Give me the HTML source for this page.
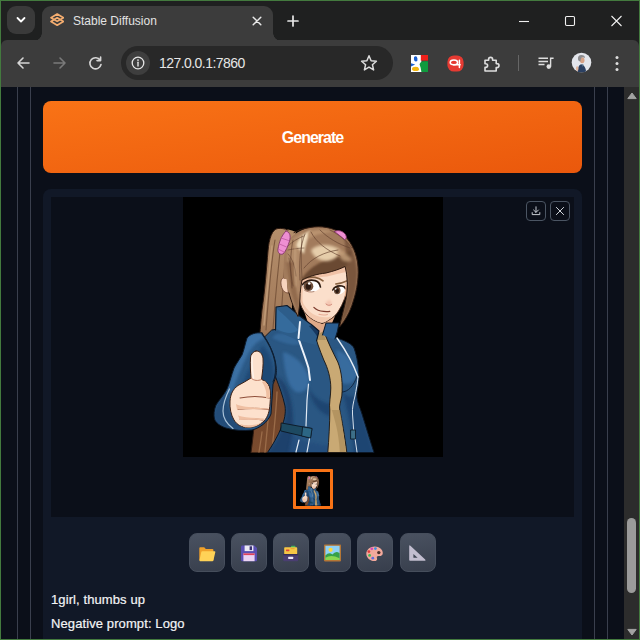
<!DOCTYPE html>
<html lang="en">
<head>
<meta charset="utf-8">
<title>Stable Diffusion</title>
<style>
*{box-sizing:border-box;margin:0;padding:0}
html,body{width:640px;height:640px;overflow:hidden;background:#437a3e}
body{position:relative;font-family:"Liberation Sans",sans-serif}
.abs{position:absolute}
#win{left:1px;top:1px;width:638px;height:638px;background:#1f2020;overflow:hidden}
/* coordinates inside #win are page coords minus 1 */
#tabdd{left:6px;top:5px;width:28px;height:28px;border-radius:9px;background:#3a3a3a}
#tab{left:41px;top:5px;width:231px;height:35px;background:#3c3c3c;border-radius:9px 9px 0 0}
#tab:before,#tab:after{content:"";position:absolute;bottom:0;width:8px;height:8px;background:radial-gradient(circle at 0 0,rgba(0,0,0,0) 7.5px,#3c3c3c 8px)}
#tab:before{left:-8px}
#tab:after{right:-8px;background:radial-gradient(circle at 100% 0,rgba(0,0,0,0) 7.5px,#3c3c3c 8px)}
#tabtitle{left:72px;top:12px;font-size:12px;line-height:16px;color:#e3e3e3;white-space:nowrap;transform-origin:0 50%}
#toolbar{left:0;top:39px;width:638px;height:47px;background:#3c3c3c;border-radius:6px 6px 0 0}
#pill{left:120px;top:45px;width:272px;height:34px;border-radius:17px;background:#282828}
#info{left:125px;top:50px;width:24px;height:24px;border-radius:12px;background:#3e3e3e}
#url{left:158px;top:53px;font-size:14px;letter-spacing:-0.55px;line-height:18px;color:#e6e6e6;white-space:nowrap;transform-origin:0 50%}
#page{left:0;top:86px;width:623px;height:552px;background:#0b0f19;overflow:hidden}
.vl{top:0;width:1px;height:552px;background:#3a3f4d}
#sb{left:623px;top:86px;width:15px;height:552px;background:#2c2c2c}
#thumbbar{left:3px;top:431px;width:9px;height:75px;border-radius:5px;background:#9b9b9b}
#gen{left:42px;top:14px;width:539px;height:72px;border-radius:8px;background:linear-gradient(to bottom right,#f97316,#ea580c);color:#fff;font-weight:bold;font-size:16px;letter-spacing:-1px;text-align:center}
#gentxt{left:0;top:27px;width:539px;line-height:20px;white-space:nowrap}
#panel{left:42px;top:102px;width:539px;height:470px;border-radius:8px;background:#111827}
#gal{left:8px;top:8px;width:523px;height:320px;background:#0b0f19}
#img{left:132px;top:0;width:260px;height:260px;background:#000}
.ib{top:4px;width:20px;height:20px;border:1px solid #4b5563;border-radius:4px;background:#0b0f19}
#th{left:242px;top:272px;width:40px;height:40px;border:3px solid #f97316;background:#000;border-radius:1px}
.tb{top:344px;width:36px;height:39px;border-radius:8px;border:1px solid #464e5c;background:linear-gradient(170deg,#4a5261,#373e4c)}
.tb svg{position:absolute;left:9px;top:11px;width:16px;height:16px}
.info{left:8px;font-size:13px;letter-spacing:0.1px;-webkit-text-stroke:0.2px #f3f4f6;line-height:20px;color:#f3f4f6;white-space:nowrap;transform-origin:0 50%}
</style>
</head>
<body>
<div id="win" class="abs">
  <!-- tab strip -->
  <div id="tabdd" class="abs"><svg class="abs" style="left:9px;top:10px" width="10" height="8" viewBox="0 0 10 8"><path d="M1.5 2 L5 5.5 L8.5 2" fill="none" stroke="#fff" stroke-width="1.8" stroke-linecap="round" stroke-linejoin="round"/></svg></div>
  <div id="tab" class="abs"></div>
  <svg class="abs" style="left:48.8px;top:12.4px" width="14.4" height="13.2" viewBox="0 0 14.4 13.2"><g fill="none" stroke="#f4ad70" stroke-width="1.7" stroke-linejoin="round"><path d="M7.2 1 L13.4 4.7 L7.2 8.4 L1 4.7 Z"/><path d="M7.2 4.8 L13.4 8.5 L7.2 12.2 L1 8.5 Z"/></g></svg>
  <div id="tabtitle" class="abs">Stable Diffusion</div>
  <svg class="abs" style="left:251px;top:15px" width="10" height="10" viewBox="0 0 10 10"><path d="M1.2 1.2 L8.8 8.8 M8.8 1.2 L1.2 8.8" stroke="#e8e8e8" stroke-width="1.5" stroke-linecap="round"/></svg>
  <svg class="abs" style="left:286px;top:14px" width="12" height="12" viewBox="0 0 12 12"><path d="M6 1 V11 M1 6 H11" stroke="#e8e8e8" stroke-width="1.7" stroke-linecap="round"/></svg>
  <!-- window controls -->
  <svg class="abs" style="left:517px;top:13px" width="106" height="14" viewBox="0 0 106 14"><g fill="none" stroke="#f0f0f0" stroke-width="1.1"><path d="M1 7.5 H11"/><rect x="47.5" y="2.5" width="9" height="9" rx="1.2"/><path d="M93.5 2 L103.5 12 M103.5 2 L93.5 12"/></g></svg>
  <!-- toolbar -->
  <div id="toolbar" class="abs"></div>
  <svg class="abs" style="left:14px;top:54px" width="90" height="16" viewBox="0 0 90 16"><g fill="none" stroke-width="1.6" stroke-linecap="round" stroke-linejoin="round"><path d="M14 8 H3 M8 3 L3 8 L8 13" stroke="#d6d6d6"/><path d="M39 8 H50 M45 3 L50 8 L45 13" stroke="#7a7a7a"/><path d="M85.2 5.2 A5.6 5.6 0 1 0 86 9.5 M85.6 2 V5.6 H82" stroke="#d6d6d6"/></g></svg>
  <div id="pill" class="abs"></div>
  <div id="info" class="abs"><svg class="abs" style="left:5px;top:5px" width="14" height="14" viewBox="0 0 14 14"><circle cx="7" cy="7" r="5.8" fill="none" stroke="#e6e6e6" stroke-width="1.3"/><path d="M7 6.3 V10" stroke="#e6e6e6" stroke-width="1.4" stroke-linecap="round"/><circle cx="7" cy="4.1" r=".9" fill="#e6e6e6"/></svg></div>
  <div id="url" class="abs">127.0.0.1:7860</div>
  <svg class="abs" style="left:359px;top:53px" width="18" height="18" viewBox="0 0 18 18"><path d="M9 1.8 L11.1 6.7 L16.4 7.2 L12.4 10.7 L13.6 15.9 L9 13.1 L4.4 15.9 L5.6 10.7 L1.6 7.2 L6.9 6.7 Z" fill="none" stroke="#dcdcdc" stroke-width="1.5" stroke-linejoin="round"/></svg>
  <!-- extension icons -->
  <svg class="abs" style="left:410px;top:53.5px" width="17" height="17" viewBox="0 0 17 17"><rect x="0" y="0" width="10.4" height="17" fill="#fff"/><rect x="9.8" y="0" width="7.2" height="5.6" fill="#f0201a"/><path d="M8.4 17 V10 Q9 6.2 12.6 6.2 H17 V17 Z" fill="#109a3e"/><ellipse cx="4.7" cy="3.9" rx="1.8" ry="2.7" fill="#1a5fd0" transform="rotate(-8 4.7 3.9)"/><path d="M0 8.2 L4.2 9.6 L0 11.6 Z" fill="#1a5fd0"/><ellipse cx="4.6" cy="13.9" rx="3.6" ry="2.1" fill="#f4b70e"/><path d="M6.2 7.6 Q9 9.6 9.6 12.6 L10.4 17 H8 Q8.8 12 4.8 10 Z" fill="#fff"/></svg>
  <svg class="abs" style="left:446px;top:54px" width="17" height="17" viewBox="0 0 17 17"><rect x="0.4" y="0.4" width="16.2" height="16.2" rx="6.5" fill="#e63a32"/><ellipse cx="6.9" cy="7.4" rx="3.7" ry="2.3" fill="none" stroke="#fff" stroke-width="1.5"/><path d="M6.5 9.7 H13.2 M12.4 5.2 V12.4" fill="none" stroke="#fff" stroke-width="1.5" stroke-linecap="round"/></svg>
  <svg class="abs" style="left:482px;top:54px" width="18" height="18" viewBox="0 0 18 18"><path d="M2 5.2 H5.6 V4.4 A2 2 0 0 1 9.6 4.4 V5.2 H13.2 V8.6 H14 A2 2 0 0 1 14 12.6 H13.2 V16 H2 V12.4 H2.8 A1.8 1.8 0 0 0 2.8 8.8 H2 Z" fill="none" stroke="#dedede" stroke-width="1.6" stroke-linejoin="round"/></svg>
  <div class="abs" style="left:517px;top:54px;width:1px;height:16px;background:#666"></div>
  <svg class="abs" style="left:537px;top:55px" width="16" height="14" viewBox="0 0 16 14"><g fill="none" stroke="#dedede" stroke-width="1.5"><path d="M0.5 2.2 H10 M0.5 5.4 H10 M0.5 8.6 H6.5"/><path d="M12.6 10.4 V2.2 H15.6" stroke-width="1.4"/></g><circle cx="10.8" cy="10.6" r="2.3" fill="#dedede"/></svg>
  <svg class="abs" style="left:569.5px;top:51px" width="21" height="21" viewBox="0 0 21 21"><defs><clipPath id="avc"><circle cx="10.5" cy="10.5" r="9.8"/></clipPath></defs><circle cx="10.5" cy="10.5" r="9.8" fill="#e3e5eb"/><g clip-path="url(#avc)"><path d="M6.6 21 Q6.4 13.6 10 12.2 Q14.6 12.6 15.4 21 Z" fill="#2b4062"/><path d="M10.4 12.2 L11.6 15 L12.6 12.4 Z" fill="#4e6f8c"/><ellipse cx="11.2" cy="8.2" rx="2.3" ry="3" fill="#d6a286"/><path d="M7 7.6 Q6.4 3.2 10.4 3 Q14 3 14 6 Q12 4.8 10.6 5.6 Q9.6 7 9.4 9.6 Q7.4 9.6 7 7.6 Z" fill="#8b8b8e"/><ellipse cx="6.2" cy="16.6" rx="1.3" ry="2.3" fill="#e0b59c"/></g></svg>
  <svg class="abs" style="left:614px;top:54px" width="4" height="17" viewBox="0 0 4 17"><g fill="#dedede"><circle cx="2" cy="2.5" r="1.5"/><circle cx="2" cy="8.5" r="1.5"/><circle cx="2" cy="14.5" r="1.5"/></g></svg>

  <!-- web page -->
  <div id="page" class="abs">
    <div class="abs vl" style="left:16px"></div>
    <div class="abs vl" style="left:29px"></div>
    <div class="abs vl" style="left:593px"></div>
    <div class="abs vl" style="left:606px"></div>
    <div id="gen" class="abs"><div id="gentxt" class="abs">Generate</div></div>
    <div id="panel" class="abs">
      <div id="gal" class="abs">
        <div id="img" class="abs"><!--GIRL--><svg class="abs" style="left:0;top:0" width="260" height="260" viewBox="183 197 260 260">
<defs>
<linearGradient id="pg" x1="0" y1="230" x2="0" y2="452" gradientUnits="userSpaceOnUse"><stop offset="0" stop-color="#b48e6b"/><stop offset=".45" stop-color="#a07858"/><stop offset=".68" stop-color="#6f4329"/><stop offset="1" stop-color="#7a4b2e"/></linearGradient>
<linearGradient id="jg" x1="260" y1="330" x2="370" y2="450" gradientUnits="userSpaceOnUse"><stop offset="0" stop-color="#2e5e8b"/><stop offset=".5" stop-color="#295581"/><stop offset="1" stop-color="#26507b"/></linearGradient>
<linearGradient id="hg" x1="290" y1="228" x2="350" y2="300" gradientUnits="userSpaceOnUse"><stop offset="0" stop-color="#b08a69"/><stop offset=".5" stop-color="#a67f60"/><stop offset="1" stop-color="#8f674a"/></linearGradient>
<filter id="bl" x="-30%" y="-30%" width="160%" height="160%"><feGaussianBlur stdDeviation="1.6"/></filter><filter id="bl2" x="-30%" y="-30%" width="160%" height="160%"><feGaussianBlur stdDeviation="0.8"/></filter>
<symbol id="girl" viewBox="183 197 260 260">
<g stroke-linejoin="round" stroke-linecap="round">
<!-- ponytail -->
<path d="M278 228.5 C272 229 269 239 268 251 C266.5 268 265 290 262 310 C259.5 335 257.5 365 256.5 395 C255 420 253 438 251 452.5 L292 452.5 L292 300 L291 254 L296 232 C290 229.5 284 228 278 228.5 Z" fill="url(#pg)"/><path d="M288 230 C284.5 228.6 281 228.2 278 228.5 C272 229 269 239 268 251 C266.5 268 265 290 262 310 C259.5 335 257.5 365 256.5 395 C255 420 253 438 251 452.5" fill="none" stroke="#2e1a10" stroke-width="1"/>
<path d="M275 240 C271 262 269 290 266 330 M280 252 C277 280 274 310 272 345 M285 262 C283 290 281 315 280 335" fill="none" stroke="#7b573d" stroke-width="1.1"/>
<path d="M272 246 C269 270 267 295 264 325" fill="none" stroke="#c6a07c" stroke-width="1.6" opacity=".8"/>
<path d="M262 432 C261 440 260 446 259 452 M270 400 C268 420 266 440 265 452 M277 392 C276 415 273 438 272 452" fill="none" stroke="#9b6c49" stroke-width="1.3"/>
<!-- torso -->
<clipPath id="tc"><path d="M272 330 C290 326 320 328 337 338 C346 341 352 344 354 348 C357 356 359 368 359 378 C359 386 356 392 357 398 C358 404 360 408 361 411 C364 420 368 434 374 452.5 L267.5 452.5 C272 446 278 436 281.5 427 C284.5 420 286 413 285 406 C283 396 279 386 276 378 L262 340 Z"/></clipPath>
<path d="M272 330 C290 326 320 328 337 338 C346 341 352 344 354 348 C357 356 359 368 359 378 C359 386 356 392 357 398 C358 404 360 408 361 411 C364 420 368 434 374 452.5 L267.5 452.5 C272 446 278 436 281.5 427 C284.5 420 286 413 285 406 C283 396 279 386 276 378 L262 340 Z" fill="#2a5783"/>
<g clip-path="url(#tc)">
<path d="M283 352 C292 354 304 362 309 378 C310 388 304 394 296 392 C288 388 284 370 283 352 Z" fill="#3a70a4" filter="url(#bl)" opacity=".9"/>
<path d="M336 350 C346 352 354 362 357 376 C354 384 346 386 340 382 C338 372 338 360 336 350 Z" fill="#3a70a4" filter="url(#bl)" opacity=".85"/>
<path d="M276 376 C282 388 287 402 286 414 C284 430 274 444 266 454 L290 454 C294 436 294 414 291 400 C288 388 284 380 276 376 Z" fill="#1b406b" filter="url(#bl)" opacity=".9"/>
<path d="M308 388 C314 398 324 404 332 404 L331 416 C320 414 312 404 308 388 Z" fill="#1c426e" filter="url(#bl)" opacity=".85"/>
<path d="M342 392 C348 398 354 398 358 394 C360 406 366 424 374 454 L354 454 C352 430 348 410 342 392 Z" fill="#1d436f" filter="url(#bl)" opacity=".85"/>
<path d="M292 436 C300 440 314 444 330 446 L330 454 L288 454 Z" fill="#21497a" filter="url(#bl)" opacity=".6"/>
<path d="M276 334 C286 332 296 336 300 344 C294 346 284 344 272 338 Z" fill="#3a70a4" filter="url(#bl2)" opacity=".6"/>
</g>
<path d="M272 330 C290 326 320 328 337 338 C346 341 352 344 354 348 C357 356 359 368 359 378 C359 386 356 392 357 398 C358 404 360 408 361 411 C364 420 368 434 374 452.5 L267.5 452.5 C272 446 278 436 281.5 427 C284.5 420 286 413 285 406 C283 396 279 386 276 378 L262 340 Z" fill="none" stroke="#0c1828" stroke-width="1"/>
<path d="M357 376 C354 386 348 392 342 392" fill="none" stroke="#10233c" stroke-width=".9"/>
<!-- tan strip -->
<g transform="translate(-1.2 0)"><path d="M315 330 L325 331 C328 340 334 352 339 362 C343 372 344 384 343 396 C342 402 340 406 341 410 C343 420 346 436 348 452.5 L329 452.5 C330 440 331 424 331 410 C330 404 332 396 332 388 C332 378 329 368 325 360 C321 350 317 340 315 330 Z" fill="#c9a974" stroke="#1a1410" stroke-width=".9"/>
<path d="M333 410 C336 420 340 432 341 452 L347 452 C345 436 343 420 341 410 Z" fill="#a98b5a" opacity=".7"/>
<path d="M316 331 L324 332 L327 340 L319 340 Z" fill="#a98b5a" opacity=".8"/>
</g>
<!-- white stripes -->
<path d="M300 322 L298.5 338 C300 344 305 356 308.5 368 L310 380" fill="none" stroke="#eef3fa" stroke-width="2"/>
<path d="M308.5 384 L307 400 L306 426 M310 436 L307 452 M299 440 L296 452" fill="none" stroke="#e1eaf4" stroke-width="1.2"/>
<path d="M337 338 C344 348 352 360 358 377" fill="none" stroke="#e6eef6" stroke-width="1.4"/><path d="M358 377 C357.5 384 356 390 355 396 C353.5 402 352 408 352.5 414 L353.5 428 L357 452" fill="none" stroke="#d5e0ec" stroke-width="1"/>
<!-- pocket straps -->
<path d="M281.5 423 L312 428.5 L310.5 438 L281 431 Z" fill="#1d4961" stroke="#0b1622" stroke-width=".9"/>
<path d="M303 427 L312 428.5 L310.5 438 L302 436 Z" fill="#2c6684" stroke="#0b1622" stroke-width=".7"/>
<path d="M351 430 L355.5 430 L355.5 439 L351 439 Z" fill="#3d6f88" stroke="#0b1622" stroke-width=".8"/>
<!-- neck -->
<path d="M303 308 L322 324 L335 316 L330 328 L320 333 L309 326 Z" fill="#dfa988"/>
<!-- collar -->
<path d="M276 307 L287 305.5 C292 309 296 313 299 315.5 C304 319 309 323 312 325 L319 331 L316 345 C304 342 290 338 275.5 330 Z" fill="#2d5d8a"/>
<path d="M277 309 C283 314 292 322 298 330 C294 334 286 334 276.5 329 Z" fill="#3b74a9" opacity=".6"/>
<path d="M312 325 L319 331 L317.5 337 C315 333 312 329 309 326 Z" fill="#17385f"/>
<path d="M275.5 330 L276 307 L287 305.5 C292 309 296 313 299 315.5 C304 319 309 323 312 325 L319 331 L316.5 341" fill="none" stroke="#0c1828" stroke-width="1.1"/>
<path d="M326 323 L339 323 L337.5 331 L335 340 L322.5 335 Z" fill="#2a5d90"/>
<path d="M322.5 335 L326 323 L339 323 L337.5 331 L335 339" fill="none" stroke="#0c1828" stroke-width="1"/>
<path d="M300 322 L298.5 338" fill="none" stroke="#eef3fa" stroke-width="2"/>
<!-- ear -->
<path d="M287 279 C283 276 280.5 279 281 284 C281.5 289 284 293 288 293 Z" fill="#f6d3bd" stroke="#6a3f2c" stroke-width=".8"/>
<!-- face -->
<path d="M301 279 C306 275 316 272 326 272 C334 270 340 268 345 266 C347 272 348 280 347 288 C346 296 343 304 338.5 311 C336 315 333 318 329 320 C326 322 324 323.5 321 323 C316 322 311 319 307 315 C303 311 300 305 299 298 C299 291 300 285 301 279 Z" fill="#fbdfcb" stroke="#4a2a1c" stroke-width=".9"/>
<path d="M300 297 C301 305 305 312 310 317 C314 320 318 322.5 322 323 C326 322 330 319 333 316 C327 318 320 318 313 314 C307 310 303 304 300 297 Z" fill="#f1c5aa" opacity=".85"/>
<path d="M301 280 C306 276 316 273 326 273 C334 271 340 269 345 267 L346 272 C340 273 334 275 327 276.5 C318 277 308 279.5 302 284 Z" fill="#eebfa3" opacity=".9"/>
<path d="M301 282 L304 282 C302.5 290 302 298 303 306 L300 300 Z" fill="#eebfa3" opacity=".8"/>
<!-- left eye -->
<path d="M302.6 285.6 C304.6 281.6 310 279.8 315 281.2 C318 282.2 319.6 284.6 320 287.6 C318.6 290.6 315 292 311 291.6 C306.6 291.4 303.6 289 302.6 285.6 Z" fill="#fff"/>
<circle cx="308.4" cy="286.2" r="4.9" fill="#6f4f3b"/>
<ellipse cx="308.3" cy="286.6" rx="2.7" ry="3.1" fill="#2c1a12"/>
<circle cx="309.2" cy="283.5" r="1.25" fill="#fff"/>
<path d="M302.4 284.6 C304.6 281 310 279.2 315.2 280.6 C318.4 281.6 320 284 320.4 287" fill="none" stroke="#2c1a10" stroke-width="1.7"/>
<path d="M304.6 290.4 C307 292 311 292.4 314 291.6" fill="none" stroke="#8c5a46" stroke-width=".7"/>
<!-- right eye -->
<path d="M333 290.4 C334.4 287.2 338 285.8 341.6 286.4 C343.6 286.9 344.6 288 344.6 290.4 C343.2 293.2 340.4 294.6 337.4 294.4 C335 294 333.4 292.6 333 290.4 Z" fill="#fff"/>
<ellipse cx="337.2" cy="290.5" rx="3.3" ry="3.8" fill="#6f4f3b"/>
<ellipse cx="337.1" cy="290.8" rx="1.9" ry="2.4" fill="#2c1a12"/>
<circle cx="335.6" cy="288.7" r=".95" fill="#fff"/>
<path d="M332.8 290 C334.4 286.8 338 285.4 342 286 C344 286.4 345 287.2 345.4 288.6" fill="none" stroke="#2c1a10" stroke-width="1.6"/>
<!-- brows -->
<path d="M302 279.7 C306 277.5 311 276.8 315 277.3 C318 277.9 321 279.1 323 280.8" fill="none" stroke="#87603f" stroke-width="1.7"/>
<path d="M335.8 284 C340 283.5 344 282.4 347.4 280.8" fill="none" stroke="#87603f" stroke-width="1.6"/>
<!-- nose & mouth -->
<path d="M325.4 302.4 C326.6 305.4 329.6 306.4 331.8 304.2 C331.4 302.6 330.6 301 330 299.6" fill="#eeb09c" opacity=".55" filter="url(#bl2)"/>
<path d="M326 304 C327.6 305.6 330 305.8 331.6 304.4" fill="none" stroke="#c97c6c" stroke-width=".9"/>
<path d="M313.9 307.4 C316.4 310 320 311.2 323.6 311.4 C326 311.6 328 311.6 329.8 311.3" fill="none" stroke="#7d3b2e" stroke-width="1.3"/>
<path d="M319 314.2 C322 315.2 325 315.2 327.4 314.4" fill="none" stroke="#e8ab95" stroke-width="1.1"/>
<path d="M345 281 C346.6 285 347.2 289 346.6 294 L344 300 C345.4 294 345.6 287 345 281 Z" fill="#efb38f" opacity=".8"/>
<!-- hair front -->
<clipPath id="hc"><path d="M284 279 C283 266 284 254 286 245 C290 236 299 230 310 227.5 C321 225.5 333 227.5 342 233.5 C350 240 355.5 250 357.5 262 C359.5 276 357 290 353 302 C350 312 345 321 339.5 327 C341 320 343 312 345 304 C347 296 348 286 347 278 C346.5 273 346 270 345 266.5 C340 269 334 271 326 273 C317 274 308 276.5 302 280 C301 286 300 292 300 298 L299.5 306 L298 316.5 C295 311 291 301 289 293 C287.5 288 286.5 283 287 279 Z"/></clipPath>
<path d="M284 279 C283 266 284 254 286 245 C290 236 299 230 310 227.5 C321 225.5 333 227.5 342 233.5 C350 240 355.5 250 357.5 262 C359.5 276 357 290 353 302 C350 312 345 321 339.5 327 C341 320 343 312 345 304 C347 296 348 286 347 278 C346.5 273 346 270 345 266.5 C340 269 334 271 326 273 C317 274 308 276.5 302 280 C301 286 300 292 300 298 L299.5 306 L298 316.5 C295 311 291 301 289 293 C287.5 288 286.5 283 287 279 Z" fill="#a27b5c"/>
<g clip-path="url(#hc)">
<!-- right shadow side -->
<path d="M344 238 C352 246 356 258 357 270 C358 290 352 310 339 328 L346 300 C349 286 348 274 345 266 C346 256 346 246 344 238 Z" fill="#7a563d" filter="url(#bl2)"/>
<!-- under-bang shadow -->
<path d="M300 282 C306 270 318 262 332 258 C340 256 346 254 352 250 L346 268 C338 271 332 273 326 274 C316 275 308 278 300 282 Z" fill="#6b4932" filter="url(#bl2)"/>
<!-- left pulled-back zone lighter -->
<path d="M287 244 C292 238 298 234 304 232 C300 244 299 258 300 272 L299 300 L297 316 C292 304 288 290 287 278 Z" fill="#b28c6b" filter="url(#bl2)"/>
<path d="M286 262 C287 272 288 282 291 294 L298 316 L299 300 C296 290 294 276 294 262 Z" fill="#8a6447" filter="url(#bl2)" opacity=".8"/>
<!-- bang highlight band -->
<path d="M311 250 C317 244 329 243 339 249 C340 255 335 260 327 261 C319 261 313 257 311 250 Z" fill="#e6cdaa" filter="url(#bl)"/>
<path d="M336 248 C342 250 348 254 352 260 C350 262 346 262 342 260 C339 256 337 252 336 248 Z" fill="#c7a37e" filter="url(#bl)" opacity=".8"/>
<!-- part highlight -->
<path d="M296 246 C298 238 304 232.5 311 230.5 C308 237 305 245 304 254 Z" fill="#efdcbc" filter="url(#bl2)"/>
<path d="M308 232 C316 229 326 229 334 232 C326 232 316 234 309 239 Z" fill="#b9936f" filter="url(#bl2)"/>
<!-- strands -->
<path d="M305 234 C300 246 299 262 300 280 M293 240 C290 254 290 270 292 288 M311 232 C316 242 326 250 340 256 M320 230 C328 238 338 244 350 248 M304 268 C312 258 324 252 338 250 M330 230 C338 234 346 240 352 248" fill="none" stroke="#654330" stroke-width=".8" opacity=".85"/>
<path d="M288 246 C292 242 298 238 304 236 M288 250 C293 249 299 248 304 248 M288 254 C292 258 295 266 296 276 M289 258 C290 266 291 276 293 286 M302 236 C301 250 301 264 302 278" fill="none" stroke="#5f3f2c" stroke-width=".7" opacity=".8"/>
<path d="M296 242 C294 256 294 270 296 286" fill="none" stroke="#d2b08c" stroke-width="1.4" opacity=".7" filter="url(#bl2)"/>
</g>
<path d="M294 232.6 C299 229.8 304 228.4 310 227.5 C321 225.5 333 227.5 342 233.5 C350 240 355.5 250 357.5 262 C359.5 276 357 290 353 302 C350 312 345 321 339.5 327 C341 320 343 312 345 304 C347 296 348 286 347 278 C346.5 273 346 270 345 266.5 C340 269 334 271 326 273 C317 274 308 276.5 302 280 C301 286 300 292 300 298 L299.5 306 L298 316.5 C295 311 291 301 289 293" fill="none" stroke="#2e1a10" stroke-width="1"/>
<!-- pink ties -->
<path d="M286 231 C290 232 291 236 289.5 241 C288 246 286 251 283 254 C280 255 277.5 253 278 249 C279 243 281 236 286 231 Z" fill="#ee8fd2" stroke="#7a2c62" stroke-width=".8"/>
<path d="M281 238 L288.5 240.5 M279.5 244 L286.5 247 M279 249.5 L284 252" fill="none" stroke="#c55fa6" stroke-width=".9"/>
<path d="M334.5 231.5 C338 229.5 343 231 345.5 234.5 C347 237 346.5 239.5 344.5 239.5 C341 236.5 337.5 234 334.5 231.5 Z" fill="#ee8fd2" stroke="#7a2c62" stroke-width=".8"/>
<!-- sleeve -->
<clipPath id="sc"><path d="M262 333 C256 332 250 334 247 338 C245 344 244 350 242 355 C239 360 236 364 234 368 C231 376 230 382 227 389 C224 395 219 400 216 405 C214 410 213.5 415 214.5 419 C216 423 220 426 226 428 C234 430.5 244 431 252 430 C260 428 268 422 271 414 L273 384 C276 378 277 372 276 366 C275 356 270 344 262 333 Z"/></clipPath>
<path d="M262 333 C256 332 250 334 247 338 C245 344 244 350 242 355 C239 360 236 364 234 368 C231 376 230 382 227 389 C224 395 219 400 216 405 C214 410 213.5 415 214.5 419 C216 423 220 426 226 428 C234 430.5 244 431 252 430 C260 428 268 422 271 414 L273 384 C276 378 277 372 276 366 C275 356 270 344 262 333 Z" fill="#2c5a87"/>
<g clip-path="url(#sc)">
<path d="M262 333 C254 331 248 334 246 340 C243 352 238 360 234 368 C231 378 229 386 226 392 L232 392 C236 380 242 366 248 354 C252 346 258 340 266 338 Z" fill="#3d73a8" filter="url(#bl)" opacity=".9"/>
<path d="M262 345 C258 356 250 366 244 380 C240 392 238 408 242 426 L266 426 L274 384 C276 370 272 354 262 345 Z" fill="#1f4673" filter="url(#bl)" opacity=".85"/>
<path d="M226 392 C220 400 214 408 214 418 C216 426 230 432 252 430 C240 428 228 420 226 392 Z" fill="#204875" filter="url(#bl2)" opacity=".8"/>
</g>
<path d="M262 333 C256 332 250 334 247 338 C245 344 244 350 242 355 C239 360 236 364 234 368 C231 376 230 382 227 389 C224 395 219 400 216 405 C214 410 213.5 415 214.5 419 C216 423 220 426 226 428 C234 430.5 244 431 252 430 C260 428 268 422 271 414 L273 384 C276 378 277 372 276 366 C275 356 270 344 262 333 Z" fill="none" stroke="#0c1828" stroke-width="1"/>
<path d="M262 334 C268 342 273 352 275 362 C276 370 276 376 273 382" fill="none" stroke="#0f2035" stroke-width="1.1"/>
<path d="M229.5 389 C226 396 223 404 223 411 C223 418 227 424 233 428.5" fill="none" stroke="#a9c2d8" stroke-width="1.2"/>
<!-- fist -->
<path d="M256 351 C259 350.5 262 353 263 358 C263.5 365 262.5 372 261.5 379.5 C265 380.5 268 383 269.5 387 C271 392 270.5 398 270 404 C269.5 411 268 417 264 421 C260 425 254 427.5 248 427.5 C242 427.5 237 425 234 420 C231 415 229.5 408 230 401 C230.5 394 233 389 238 385.5 C242 383 247 381 251 378 C250.5 372 250 364 250.5 358 C251 354 253 351.5 256 351 Z" fill="#fde1cd" stroke="#3e2216" stroke-width="1"/>
<path d="M240 398 C250 396 260 396 269.5 398 M238 409.5 C248 408 258 408 268.5 409.5 M240 419 C248 418.5 256 418.5 263 420" fill="none" stroke="#8f4f3a" stroke-width="1.1"/>
<path d="M262 382 C266 388 267 394 266 398 L269.5 398 C270.5 392 269 385 265 381 Z" fill="#efbfa2"/>
<path d="M236 404 C240 406.5 250 407.5 268.5 408.5 L268.5 409.5 C256 409 244 409 237 409.5 Z M238 415.5 C244 417.5 254 418 264 418.5 L263 420 C254 419.5 246 419.5 240 420 Z M240 424 C246 426 256 425.5 262 422.5 C258 426 252 427.5 248 427.5 C244 427.5 242 426 240 424 Z" fill="#efbfa2"/>
<path d="M251 378 C254 381 258 381 261.5 379.5" fill="none" stroke="#b97258" stroke-width=".9"/>
<path d="M252 356 C252 364 252.5 372 253.5 378" fill="none" stroke="#fff" stroke-width="1.6" opacity=".55"/>
</g>
</symbol>
</defs>
<use href="#girl" x="183" y="197" width="260" height="260"/>
</svg><!--/GIRL--></div>
        <div class="abs ib" style="left:475px"><svg class="abs" style="left:4px;top:4px" width="10" height="10" viewBox="0 0 10 10"><path d="M5 0.8 V6.2 M2.6 4 L5 6.4 L7.4 4 M1.2 6.6 V8.6 H8.8 V6.6" fill="none" stroke="#d1d5db" stroke-width=".95" stroke-linecap="round" stroke-linejoin="round"/></svg></div>
        <div class="abs ib" style="left:499px"><svg class="abs" style="left:4px;top:4px" width="10" height="10" viewBox="0 0 10 10"><path d="M1.4 1.4 L8.6 8.6 M8.6 1.4 L1.4 8.6" fill="none" stroke="#d1d5db" stroke-width="1" stroke-linecap="round"/></svg></div>
        <div id="th" class="abs"><!--THUMB--><svg class="abs" style="left:0;top:0" width="34" height="34" viewBox="0 0 34 34"><use href="#girl" x="0" y="0" width="34" height="34"/></svg><!--/THUMB--></div>
      </div>
      <!-- tool buttons -->
      <div class="abs tb" style="left:145.6px"><!--I1--><svg viewBox="0 0 16 16" overflow="visible"><path d="M0.3 3.2 Q0.3 2.2 1.3 2.2 H5.2 L6.8 4 H13.4 Q14.4 4 14.4 5 V15.2 H0.3 Z" fill="#f0a12a"/><path d="M3.2 6.3 H15.6 Q16.6 6.3 16.3 7.3 L14.4 15.4 Q14.2 16.2 13.3 16.2 H1.2 Q0.2 16.2 0.5 15.2 L2.3 7.1 Q2.5 6.3 3.2 6.3 Z" fill="#ffd257"/></svg><!--/I1--></div>
      <div class="abs tb" style="left:187.8px"><!--I2--><svg viewBox="0 0 16 16" overflow="visible"><path d="M1.2 0.5 H13.4 L16 3 V15 Q16 16.2 14.8 16.2 H1.2 Q0 16.2 0 15 V1.7 Q0 0.5 1.2 0.5 Z" fill="#5a4fb2"/><rect x="3.6" y="0.5" width="8.8" height="5.6" fill="#ebe9f3"/><rect x="8.6" y="1.3" width="2.4" height="3.8" fill="#3b3474"/><rect x="2.4" y="8.4" width="11.2" height="7.8" fill="#ebd3f4"/><rect x="2.4" y="8.4" width="11.2" height="1.7" fill="#e0425a"/></svg><!--/I2--></div>
      <div class="abs tb" style="left:230px"><!--I3--><svg viewBox="0 0 16 16" overflow="visible"><rect x="8" y="0.8" width="4.4" height="3" rx=".6" fill="#49b35a"/><rect x="1.2" y="2.2" width="13" height="7.2" rx=".8" fill="#f6c745"/><rect x="3" y="4.4" width="3.4" height="1.8" rx=".4" fill="#e2463c"/><rect x="7.6" y="3" width="4" height="1.2" fill="#e9a72e"/><path d="M0.2 9 H15.2 V15 Q15.2 16.2 14 16.2 H1.4 Q0.2 16.2 0.2 15 Z" fill="#4a3e72"/><rect x="0.2" y="9" width="15" height="1.3" fill="#362c58"/><rect x="5.2" y="11.8" width="5" height="2.2" rx=".5" fill="#efeaf6"/></svg><!--/I3--></div>
      <div class="abs tb" style="left:272.2px"><!--I4--><svg viewBox="0 0 16 16" overflow="visible"><rect x="-1" y="-0.6" width="17" height="17" rx=".8" fill="#b57636"/><rect x="0.4" y="0.8" width="14.2" height="14.2" fill="#8ed2f6"/><circle cx="5.6" cy="4.8" r="2.1" fill="#ffd83a"/><path d="M0.4 10.5 Q4 6.5 7.4 9.6 Q10.6 5.4 14.6 8.2 V15 H0.4 Z" fill="#36a148"/><path d="M0.4 12.8 Q6 9.2 14.6 13.2 V15 H0.4 Z" fill="#8ad750"/></svg><!--/I4--></div>
      <div class="abs tb" style="left:314.4px"><!--I5--><svg viewBox="0 0 16 16" overflow="visible"><path d="M7.8 1.4 C12.4 1.4 15.8 4.4 15.8 8 C15.8 10.6 13.6 11.4 11.8 11 C10.2 10.7 9.4 11.8 10 13.2 C10.6 14.8 9.4 16.1 7.4 16.1 C3 16.1 -0.7 12.9 -0.7 8.8 C-0.7 4.6 3.2 1.4 7.8 1.4 Z" fill="#f3a99c"/><circle cx="1.9" cy="6.6" r="1.4" fill="#e03c3c"/><circle cx="4.8" cy="3.8" r="1.4" fill="#d44bb8"/><circle cx="8.4" cy="3.6" r="1.4" fill="#3d90e2"/><circle cx="2.6" cy="10.4" r="1.4" fill="#42b955"/><circle cx="5.8" cy="13.2" r="1.4" fill="#5d6ee0"/><circle cx="11.8" cy="7.6" r="1.7" fill="#4d302b"/></svg><!--/I5--></div>
      <div class="abs tb" style="left:356.6px"><!--I6--><svg viewBox="0 0 16 16" overflow="visible"><path d="M-0.8 1.2 Q-0.8 -0.4 0.4 0.8 L15.2 14.6 Q16.2 15.8 14.8 15.8 H0 Q-0.8 15.8 -0.8 15 Z M3.4 9 V12.8 H7.6 Z" fill="#c2bed0" fill-rule="evenodd"/></svg><!--/I6--></div>
      <div class="abs info" style="top:401px">1girl, thumbs up</div>
      <div class="abs info" style="top:425px">Negative prompt: Logo</div>
    </div>
  </div>
  <!-- scrollbar -->
  <div id="sb" class="abs">
    <svg class="abs" style="left:3px;top:5px" width="10" height="8" viewBox="0 0 10 8"><path d="M5 1 L9.2 6.6 H0.8 Z" fill="#a3a3a3" stroke="#a3a3a3" stroke-width="1" stroke-linejoin="round"/></svg>
    <div id="thumbbar" class="abs"></div>
    <svg class="abs" style="left:3px;top:541px" width="10" height="8" viewBox="0 0 10 8"><path d="M5 7 L9.2 1.4 H0.8 Z" fill="#a3a3a3" stroke="#a3a3a3" stroke-width="1" stroke-linejoin="round"/></svg>
  </div>
</div>
</body>
</html>
